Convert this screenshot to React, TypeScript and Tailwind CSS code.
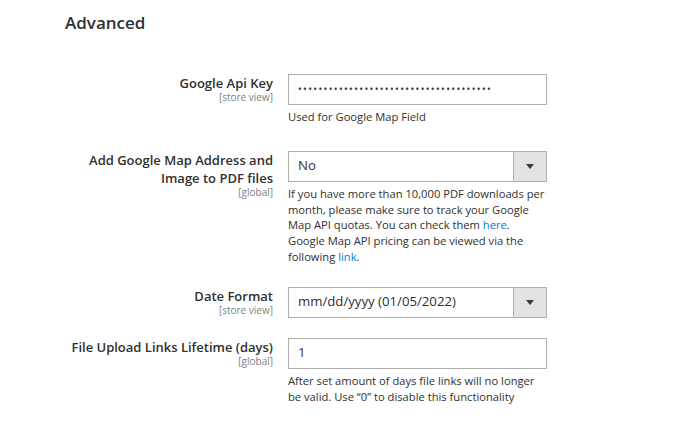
import React from "react";

const font = { fontFamily: '"Open Sans", "Liberation Sans", sans-serif' };

function Label({ lines, scope }: { lines: string[]; scope: string }) {
  return (
    <div className="w-[273px] shrink-0 text-right">
      {lines.map((l) => (
        <div key={l} className="text-[13px] leading-[18px] font-semibold text-[#303030]">
          {l}
        </div>
      ))}
      <div className="text-[10px] leading-[11px] text-[#808080]">[{scope}]</div>
    </div>
  );
}

function Select({ value }: { value: string }) {
  return (
    <div className="flex h-[31px] w-[259px] border border-[#adadad] bg-white">
      <div className="flex flex-1 items-center pl-[9px] text-[13.2px] text-[#303030]">{value}</div>
      <div className="flex w-[33px] items-center justify-center border-l border-[#adadad] bg-[#e3e3e3]">
        <svg width="8" height="5" viewBox="0 0 8 5">
          <path d="M0 0h8L4 5z" fill="#41362f" />
        </svg>
      </div>
    </div>
  );
}

function TextBox({ children }: { children: React.ReactNode }) {
  return (
    <div className="flex h-[31px] w-[259px] items-center border border-[#adadad] bg-white pl-[9px] text-[13.2px] text-[#303030]">
      {children}
    </div>
  );
}

function Note({ children }: { children: React.ReactNode }) {
  return <div className="mt-[4px] w-[259px] text-[11.2px] leading-[15.8px] text-[#303030]">{children}</div>;
}

export default function App() {
  return (
    <div className="min-h-screen w-[684px] bg-white" style={font}>
      <div className="pl-[65px] pt-[12px] text-[17px] font-semibold leading-[22px] text-[#303030]">Advanced</div>

      <div className="mt-[40px] flex flex-col">
        {/* Google Api Key */}
        <div className="flex gap-[15px]">
          <Label lines={["Google Api Key"]} scope="store view" />
          <div>
            <TextBox>
              <span className="text-[10px] tracking-[1.35px]">{"•".repeat(38)}</span>
            </TextBox>
            <Note>Used for Google Map Field</Note>
          </div>
        </div>

        {/* Google Map in PDF */}
        <div className="mt-[26px] flex gap-[15px]">
          <Label lines={["Add Google Map Address and", "Image to PDF files"]} scope="global" />
          <div>
            <Select value="No" />
            <Note>
              If you have more than 10,000 PDF downloads per month, please make sure to track your Google Map API
              quotas. You can check them <a className="text-[#007bdb]">here</a>. Google Map API pricing can be
              viewed via the following <a className="text-[#007bdb]">link</a>.
            </Note>
          </div>
        </div>

        {/* Date Format */}
        <div className="mt-[22px] flex gap-[15px]">
          <Label lines={["Date Format"]} scope="store view" />
          <Select value="mm/dd/yyyy (01/05/2022)" />
        </div>

        {/* File Upload Links Lifetime */}
        <div className="mt-[20px] flex gap-[15px]">
          <Label lines={["File Upload Links Lifetime (days)"]} scope="global" />
          <div>
            <TextBox>1</TextBox>
            <Note>After set amount of days file links will no longer be valid. Use “0” to disable this functionality</Note>
          </div>
        </div>
      </div>
    </div>
  );
}
